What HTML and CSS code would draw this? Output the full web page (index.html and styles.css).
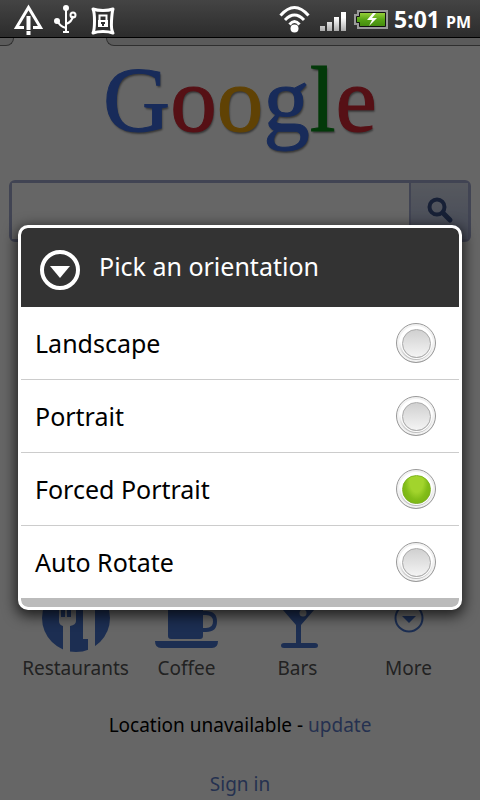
FILE: index.html
```html
<!DOCTYPE html>
<html lang="en">
<head>
<meta charset="utf-8">
<meta name="viewport" content="width=device-width, initial-scale=1">
<title>Google</title>
<link rel="stylesheet" href="styles.css">
</head>
<body>
<header class="status">
  <div class="notices">
    <svg width="32" height="34" viewBox="0 0 32 34" aria-hidden="true"><path d="M12 25.500H4.500L16.500 5.500 28.500 25.500H21" fill="none" stroke="#fff" stroke-width="3"/><path d="M14.500 14h4v14h-4zM14.500 29h4v4h-4z" fill="#fff"/></svg>
    <svg width="24" height="34" viewBox="0 2 24 34" aria-hidden="true"><g fill="none" stroke="#fff" stroke-width="2"><path d="M12 7v24M4 21q1 5 8 7M19 16q-1 6-7 8"/><circle cx="19" cy="15" r="2.500"/></g><circle cx="12" cy="8" r="3" fill="#fff"/><circle cx="3" cy="21" r="3" fill="#fff"/><path d="M9 31h6v2H9z" fill="#fff"/></svg>
    <svg width="28" height="34" viewBox="0 2 28 34" aria-hidden="true"><path d="M5 9q4 1.500 10 1.500T25 9q-1 3-1.500 12t1.500 12q-4-1.500-10-1.500T5 33q1.500-3 1.500-12T5 9z" fill="#303030" stroke="#fff" stroke-width="3" stroke-linejoin="round"/><path d="M11.500 21v-5.500h7V21" fill="none" stroke="#fff" stroke-width="2"/><path d="M10 20h10v7H10z" fill="#fff"/><path d="M13 22h4v2h-1v2h-2v-2h-1z" fill="#303030"/></svg>
  </div>
  <svg width="36" height="34" viewBox="0 3 36 34" aria-label="Wi-Fi"><g fill="none" stroke="#fff" stroke-width="3"><path d="M2.500 16.500q14-16 28 0M7 21q9.500-10 19 0M11.500 25.500q5-6 10 0"/></g><circle cx="16.500" cy="29.500" r="4" fill="#fff"/></svg>
  <svg width="28" height="34" viewBox="0 4 28 34" aria-label="Signal"><defs><linearGradient id="sig" x2="0" y2="1"><stop offset=".3" stop-color="#fff"/><stop offset="1" stop-color="#aaa"/></linearGradient></defs><path d="M0 28h5v5H0zM7 24h5v9H7zM14 19h5v14h-5zM21 14h5v19h-5z" fill="url(#sig)"/></svg>
  <svg width="34" height="34" viewBox="0 3 34 34" aria-label="Battery charging"><defs><linearGradient id="bat" x2="0" y2="1"><stop stop-color="#9ad23c"/><stop offset=".5" stop-color="#58a516"/><stop offset="1" stop-color="#438a0d"/></linearGradient></defs><path d="M3 11h31v19H3v-4H0v-11h3z" fill="#999"/><path d="M5.500 13.500h26v14h-26v-4h-3v-6h3z" fill="url(#bat)" stroke="#111"/><path d="M19 14l-6 7h5l-3 6 8-8h-5l4-5z" fill="#fff"/></svg>
  <time class="clock">5:01 <small>PM</small></time>
</header>

<main class="page">
  <div class="tabs"><span class="tab tab-side"></span><span class="tab tab-rest"></span></div>
  <h1 class="logo" aria-label="Google"><span class="blue">G</span><span class="red">o</span><span class="yellow">o</span><span class="blue">g</span><span class="green">l</span><span class="red">e</span></h1>
  <form class="search">
    <input type="search" aria-label="Search">
    <button type="button" aria-label="Search"><svg width="30" height="30" viewBox="0 0 30 30"><circle cx="12" cy="12" r="7.500" fill="none" stroke="#3a5088" stroke-width="4"/><path d="M18 18l7 7" stroke="#3a5088" stroke-width="5" stroke-linecap="round"/></svg></button>
  </form>
  <nav class="places">
    <a href="#"><svg width="70" height="70" viewBox="0 0 70 70"><circle cx="35" cy="36" r="34" fill="#4874cc"/><path d="M18 18h2v17h4V18h2v17h4V18h5v21q0 4-6 5v26h-7V44q-4-1-4-5zM42 16h12v54h-7V57h-5z" fill="#fff"/></svg>Restaurants</a>
    <a href="#"><svg width="70" height="70" viewBox="0 0 70 70"><path d="M16 22h35v32q0 3-3 3H19q-3 0-3-3zM3 59h63q0 7-6 7H9q-6 0-6-7z" fill="#4874cc"/><path d="M50 31h4q9 0 9 8.500T54 48h-4" fill="none" stroke="#4874cc" stroke-width="4"/></svg>Coffee</a>
    <a href="#"><svg width="70" height="70" viewBox="0 0 70 70"><path d="M13 20h45L38 43v18h14q3 0 3 2.500T52 66H21q-3 0-3-2.500T21 61h12V43z" fill="#4874cc"/><circle cx="40" cy="31" r="3.500" fill="#fff"/></svg>Bars</a>
    <a href="#"><svg width="70" height="70" viewBox="0 0 70 70"><circle cx="35" cy="36" r="13.500" fill="none" stroke="#4874cc" stroke-width="2"/><path d="M28 34h14l-7 7z" fill="#4874cc"/></svg>More</a>
  </nav>
  <p class="location">Location unavailable - <a href="#">update</a></p>
  <p class="signin"><a href="#">Sign in</a></p>
</main>

<div class="scrim">
  <section class="dialog" role="dialog" aria-labelledby="title">
    <header class="dialog-head">
      <svg width="42" height="42" viewBox="0 0 42 42" aria-hidden="true"><circle cx="21" cy="21" r="18" fill="none" stroke="#fff" stroke-width="4"/><path d="M11 17h20L21 29z" fill="#fff"/></svg>
      <h2 id="title">Pick an orientation</h2>
    </header>
    <div class="options">
      <label><span>Landscape</span><input type="radio" name="orientation"></label>
      <label><span>Portrait</span><input type="radio" name="orientation"></label>
      <label><span>Forced Portrait</span><input type="radio" name="orientation" checked></label>
      <label><span>Auto Rotate</span><input type="radio" name="orientation"></label>
    </div>
    <div class="dialog-foot"></div>
  </section>
</div>
</body>
</html>
```
FILE: styles.css
```css
* { box-sizing: border-box; }
html, body { height: 100%; }
body {
  margin: 0;
  overflow: hidden;
  display: flex;
  flex-direction: column;
  position: relative;
  background: #fff;
  color: #000;
  font-family: "Noto Sans", sans-serif;
}
a { color: #5c7cc8; text-decoration: none; }
h1, h2, p { margin: 0; font-weight: 400; }

.status {
  position: relative;
  z-index: 2;
  flex: none;
  height: 38px;
  padding: 0 9px 0 12px;
  display: flex;
  align-items: center;
  gap: 6px;
  color: #fff;
  background: linear-gradient(#444, #2c2c2c);
  border-bottom: 1px solid #000;
}
.status svg { flex: none; }
.notices { flex: 1; display: flex; gap: 10px; }
.clock { font-size: 23px; font-weight: 700; white-space: nowrap; }
.clock small { font-size: 16px; }

.page { flex: 1; }
.tabs { display: flex; justify-content: space-between; height: 8px; }
.tab {
  height: 8px;
  background: #e4e4e4;
  border-bottom: 1px solid #777;
}
.tab-side { width: 14px; border-bottom-right-radius: 8px; border-right: 1px solid #777; }
.tab-rest { width: 78%; border-bottom-left-radius: 8px; border-left: 1px solid #777; }

.logo {
  display: flex;
  justify-content: center;
  height: 122px;
  font: 93px/108px "Liberation Serif", serif;
  -webkit-text-stroke: 1px currentColor;
  text-shadow: 1px 2px 2px #888;
}
.blue { color: #3c6ce0; }
.red { color: #d62835; }
.yellow { color: #f0a60c; }
.green { color: #089018; }

.search {
  display: flex;
  height: 62px;
  margin: 12px 9px 0;
  border: 3px solid #a4aad0;
  border-radius: 6px;
}
.search input { flex: 1; min-width: 0; border: 0; background: #fff; }
.search button {
  width: 59px;
  padding: 0;
  border: 0;
  border-left: 2px solid #a4aad0;
  background: linear-gradient(#d8deec, #aeb9da);
}

.places {
  display: grid;
  grid-template-columns: repeat(4, 1fr);
  margin: 340px 16px 0 20px;
}
.places a {
  display: flex;
  flex-direction: column;
  align-items: center;
  gap: 3px;
  color: #555;
  font-size: 19px;
  line-height: 26px;
}
.location, .signin { text-align: center; font-size: 19px; line-height: 26px; }
.location { margin-top: 31px; }
.signin { margin-top: 33px; }

.scrim {
  position: absolute;
  inset: 38px 0 0;
  z-index: 1;
  display: flex;
  align-items: center;
  padding: 0 18px 3px;
  background: rgba(0, 0, 0, .6);
}
.dialog {
  flex: 1;
  overflow: hidden;
  background: #fff;
  border: 3px solid #fff;
  border-radius: 10px;
  box-shadow: 0 4px 14px 2px rgba(0, 0, 0, .7);
}
.dialog-head {
  display: flex;
  align-items: center;
  gap: 18px;
  height: 79px;
  padding: 5px 18px 0;
  background: #333;
  border-radius: 6px 6px 0 0;
  color: #fff;
}
.dialog-head h2 { font-size: 25px; line-height: 32px; padding-bottom: 9px; }
.options label {
  display: flex;
  align-items: center;
  justify-content: space-between;
  height: 73px;
  padding: 0 23px 0 14px;
  border-bottom: 1px solid #ccc;
  font-size: 25px;
}
.options label:last-child { height: 72px; border-bottom: 0; }
.options input {
  appearance: none;
  display: grid;
  place-items: center;
  width: 40px;
  height: 40px;
  margin: 0;
  border: 1px solid #999;
  border-radius: 50%;
  background: linear-gradient(#fff 45%, #b4b4b4);
  box-shadow: inset 0 0 0 2px #f2f2f2;
}
.options input::before {
  content: "";
  width: 27px;
  height: 27px;
  border: 1px solid #aaa;
  border-radius: 50%;
  background: linear-gradient(#d0d0d0, #f4f4f4);
  box-shadow: 0 0 0 1px #fff;
}
.options input:checked::before {
  border-color: #7db51c;
  background: radial-gradient(ellipse at 50% 20%, #a2d42c 0 35%, #82bd18 60%, #74ad10);
}
.dialog-foot { height: 9px; background: #bbb; border-radius: 0 0 7px 7px; }
```
